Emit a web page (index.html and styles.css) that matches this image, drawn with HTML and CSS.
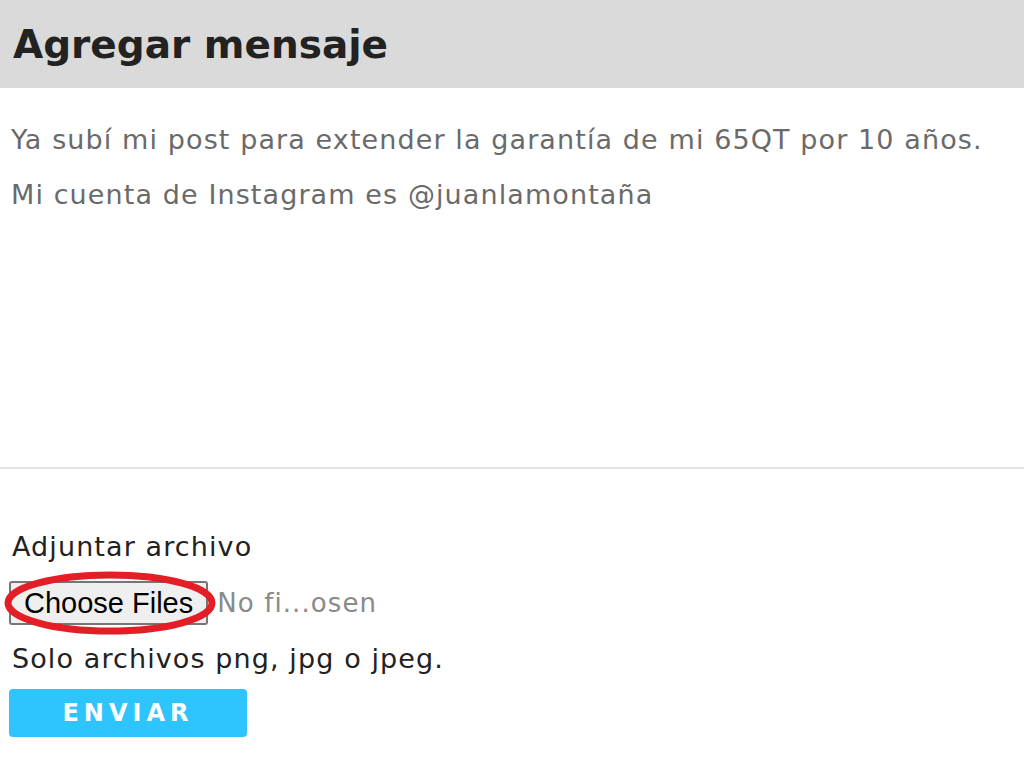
FILE: index.html
```html
<!DOCTYPE html>
<html>
<head>
    <title>Agregar mensaje</title>
    <link rel="stylesheet" href="styles.css">
</head>
<body>
    <div class="header">
        <h1>Agregar mensaje</h1>
    </div>

    <div class="message">
        <p>Ya subí mi post para extender la garantía de mi 65QT por 10 años.</p>
        <p>Mi cuenta de Instagram es @juanlamontaña</p>
    </div>

    <div class="attach">
        <label>Adjuntar archivo</label>
        <div class="file-row">
            <span class="file-btn">Choose Files</span>
            <span class="file-name">No fi...osen</span>
            <svg class="ring" width="214" height="66" viewBox="0 0 214 66">
                <ellipse cx="107" cy="33" rx="102" ry="28" fill="none" stroke="#e41e26" stroke-width="7"/>
            </svg>
        </div>
        <p class="hint">Solo archivos png, jpg o jpeg.</p>
        <button class="send">ENVIAR</button>
    </div>
</body>
</html>
```

FILE: styles.css
```css
body {
    margin: 0;
    font-family: "DejaVu Sans", "Noto Sans", sans-serif;
    background: #fff;
    color: #222;
}

.header {
    background-color: #dadada;
    height: 88px;
    display: flex;
    align-items: center;
    padding-left: 13px;
}

h1 {
    margin: 0;
    font-size: 39px;
    font-weight: 700;
    color: #222;
}

.message {
    height: 381px;
    border-bottom: 2px solid #e2e2e2;
    padding: 24px 11px 0;
    box-sizing: border-box;
}

.message p {
    margin: 0;
    font-size: 27px;
    line-height: 55px;
    letter-spacing: 1.1px;
    color: #6a6a6a;
}

.attach {
    padding: 60px 9px 0;
}

.attach label {
    display: block;
    font-size: 27px;
    line-height: 36px;
    letter-spacing: 1.1px;
    padding-left: 3px;
}

.file-row {
    position: relative;
    display: flex;
    align-items: center;
    gap: 9px;
    margin-top: 16px;
}

.file-btn {
    display: inline-block;
    font-family: "Liberation Sans", Arial, sans-serif;
    font-size: 29px;
    line-height: 40px;
    padding: 0 13px;
    color: #000;
    background: #efefef;
    border: 2px solid #767676;
    border-radius: 3px;
}

.file-name {
    font-size: 26px;
    letter-spacing: 1.1px;
    color: #8a8a8a;
}

.ring {
    position: absolute;
    left: -6px;
    top: -11px;
}

.hint {
    margin: 16px 0 0 3px;
    font-size: 27px;
    line-height: 36px;
    letter-spacing: 1.1px;
}

.send {
    margin-top: 12px;
    width: 238px;
    height: 48px;
    border: none;
    border-radius: 4px;
    background-color: #2ec4fd;
    color: #fff;
    font-family: "DejaVu Sans", sans-serif;
    font-size: 24px;
    font-weight: 700;
    letter-spacing: 5px;
    cursor: pointer;
}
```
